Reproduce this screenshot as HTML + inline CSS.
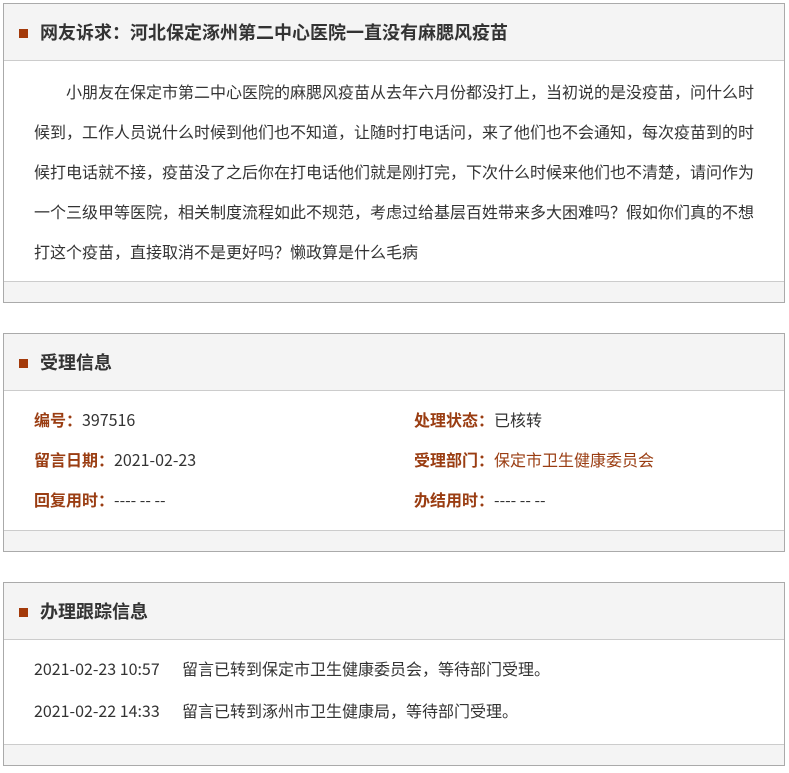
<!DOCTYPE html>
<html><head><meta charset="utf-8"><style>
*{margin:0;padding:0;box-sizing:border-box}
body{width:789px;height:773px;background:#fff;font-family:"Noto Sans CJK SC","Liberation Sans",sans-serif;color:#333;font-size:16px;position:relative}
.box{position:absolute;left:3px;width:782px;border:1px solid #aaa;background:#fff}
.hd{height:57px;background:#f4f4f4;border-bottom:1px solid #ccc;position:relative;font-size:18px;font-weight:bold;color:#333;line-height:57px;padding-left:36px}
.hd:before{content:"";position:absolute;left:15px;top:25px;width:9px;height:9px;background:#a33a0a}
.ft{height:21px;background:#f4f4f4;border-top:1px solid #ccc;position:absolute;bottom:0;left:0;right:0}
.txt{padding:10px 0 0 30px;width:750px;line-height:40px;text-indent:2em}
.row{height:40px;line-height:40px;position:relative}
.c{position:absolute;top:0;white-space:nowrap}
.l{color:#9a3d12;font-weight:bold}
.o{color:#9a3d12}
</style></head><body>
<div class="box" style="top:3px;height:300px">
<div class="hd">网友诉求：河北保定涿州第二中心医院一直没有麻腮风疫苗</div>
<div class="txt">小朋友在保定市第二中心医院的麻腮风疫苗从去年六月份都没打上，当初说的是没疫苗，问什么时候到，工作人员说什么时候到他们也不知道，让随时打电话问，来了他们也不会通知，每次疫苗到的时候打电话就不接，疫苗没了之后你在打电话他们就是刚打完，下次什么时候来他们也不清楚，请问作为一个三级甲等医院，相关制度流程如此不规范，考虑过给基层百姓带来多大困难吗？假如你们真的不想打这个疫苗，直接取消不是更好吗？懒政算是什么毛病</div>
<div class="ft"></div>
</div>
<div class="box" style="top:333px;height:219px">
<div class="hd">受理信息</div>
<div style="padding-top:8px">
<div class="row"><span class="c" style="left:30px"><span class="l">编号：</span>397516</span><span class="c" style="left:410px"><span class="l">处理状态：</span>已核转</span></div>
<div class="row"><span class="c" style="left:30px"><span class="l">留言日期：</span>2021-02-23</span><span class="c" style="left:410px"><span class="l">受理部门：</span><span class="o">保定市卫生健康委员会</span></span></div>
<div class="row"><span class="c" style="left:30px"><span class="l">回复用时：</span>---- -- --</span><span class="c" style="left:410px"><span class="l">办结用时：</span>---- -- --</span></div>
</div>
<div class="ft"></div>
</div>
<div class="box" style="top:582px;height:184px">
<div class="hd">办理跟踪信息</div>
<div style="padding-top:8px">
<div class="row" style="height:42px"><span class="c" style="left:30px">2021-02-23 10:57</span><span class="c" style="left:178px">留言已转到保定市卫生健康委员会，等待部门受理。</span></div>
<div class="row"><span class="c" style="left:30px">2021-02-22 14:33</span><span class="c" style="left:178px">留言已转到涿州市卫生健康局，等待部门受理。</span></div>
</div>
<div class="ft"></div>
</div>
</body></html>
